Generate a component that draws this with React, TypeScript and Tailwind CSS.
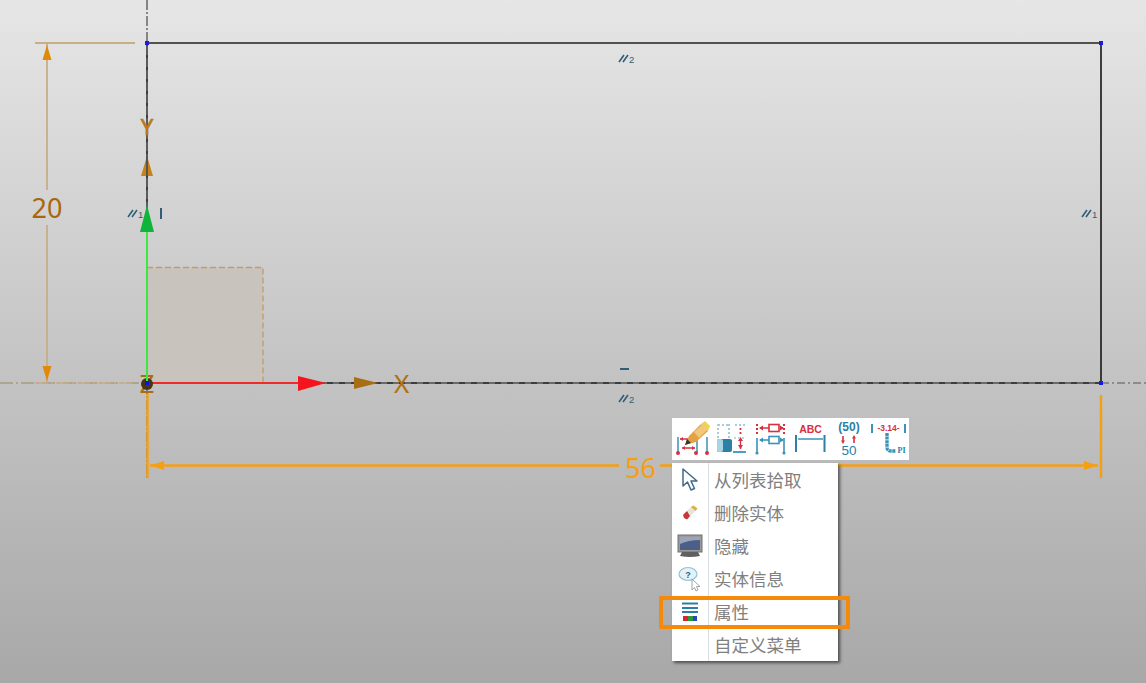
const cjk = "font-['Noto_Sans_CJK_SC','Noto_Sans',sans-serif]";
const ORANGE = "#f59f12";
const TAN = "#c9ad85";
const RED = "#d8303f";
const BLUE = "#3b93b8";
const LIGHT = "#a5cddc";
const DIMFONT = "Noto Sans, sans-serif";

function ParallelMark({ x, y, n }: { x: number; y: number; n: string }) {
  return (
    <g>
      <path d={`M${x} ${y + 7}L${x + 5} ${y}M${x + 4} ${y + 7}L${x + 9} ${y}`} stroke="#2f5d78" strokeWidth="1.6" />
      <text x={x + 10} y={y + 8} fontFamily="Liberation Sans" fontSize="9.5" fill="#3c5a6b">{n}</text>
    </g>
  );
}

function Drawing() {
  return (
    <svg className="absolute left-0 top-0" width="1146" height="683" viewBox="0 0 1146 683">
      {/* centre lines */}
      <line x1="147" y1="0" x2="147" y2="480" stroke="#858585" strokeWidth="2" strokeDasharray="10 2 2 2" />
      <line x1="0" y1="383" x2="147" y2="383" stroke="#a89a80" strokeWidth="1.5" strokeDasharray="13 3 2 3" />
      <line x1="1101" y1="383" x2="1146" y2="383" stroke="#8c8c8c" strokeWidth="1.8" strokeDasharray="8 3 2 3" />
      <line x1="147" y1="43" x2="147" y2="383" stroke="#5c5c5c" strokeWidth="2" />
      <line x1="147" y1="43" x2="147" y2="383" stroke="#222" strokeWidth="1" strokeDasharray="3 9" />

      {/* datum plane */}
      <path d="M147 267H263V383H147Z" fill="#c8c3bc" />
      <path d="M147 267.5H263V383" fill="none" stroke="#c29a6c" strokeWidth="1.3" strokeDasharray="6 3" />

      {/* rectangle */}
      <path d="M147 43H1101V383" fill="none" stroke="#222" strokeWidth="1.7" />
      <line x1="147" y1="383" x2="1101" y2="383" stroke="#6a6a6a" strokeWidth="2" />
      <line x1="147" y1="383" x2="1101" y2="383" stroke="#111" strokeWidth="1.2" strokeDasharray="6 6" />
      <rect x="145" y="41" width="4" height="4" fill="#1a1ae0" />
      <rect x="1099" y="41" width="4" height="4" fill="#1a1ae0" />
      <rect x="1099" y="381" width="4" height="4" fill="#1a1ae0" />

      {/* height dimension */}
      <line x1="35" y1="43" x2="135" y2="43" stroke={TAN} strokeWidth="2" />
      <line x1="35" y1="383" x2="135" y2="383" stroke={TAN} strokeWidth="1.5" strokeDasharray="13 3 2 3" />
      <line x1="47" y1="44" x2="47" y2="190" stroke={TAN} strokeWidth="1.8" />
      <line x1="47" y1="225" x2="47" y2="382" stroke={TAN} strokeWidth="1.8" />
      <path d="M47 45L51.5 60H42.5Z" fill="#e08a08" />
      <path d="M47 381L51.5 366H42.5Z" fill="#e08a08" />
      <text x="47" y="218" textAnchor="middle" fontFamily={DIMFONT} fontSize="27" fill="#a8670e">20</text>

      {/* width dimension */}
      <line x1="147.5" y1="394" x2="147.5" y2="478" stroke={ORANGE} strokeWidth="2.4" />
      <line x1="1101" y1="395" x2="1101" y2="478" stroke={ORANGE} strokeWidth="2.4" />
      <line x1="150" y1="465.5" x2="619" y2="465.5" stroke={ORANGE} strokeWidth="2.4" />
      <line x1="660" y1="465.5" x2="1098" y2="465.5" stroke={ORANGE} strokeWidth="2.4" />
      <path d="M150 465.5L164 461V470Z" fill={ORANGE} />
      <path d="M1098 465.5L1084 461V470Z" fill={ORANGE} />
      <text x="640.5" y="478" textAnchor="middle" fontFamily={DIMFONT} fontSize="27" fill={ORANGE}>56</text>

      {/* axes */}
      <line x1="147" y1="383" x2="147" y2="232" stroke="#3fe83f" strokeWidth="2" />
      <path d="M147 205L154 232H140Z" fill="#0fb53a" />
      <line x1="147" y1="383" x2="300" y2="383" stroke="#f02a2a" strokeWidth="2" />
      <path d="M326 383L298 376V391Z" fill="#f5141e" />
      <path d="M147 156L153 176H141Z" fill="#c98214" />
      <line x1="147" y1="156" x2="147" y2="176" stroke="#555" strokeWidth="2" />
      <path d="M378 383L354 377V389Z" fill="#a86e14" />
      <text x="401.5" y="393" textAnchor="middle" fontFamily={DIMFONT} fontSize="26" fill="#b06f14">X</text>
      <text x="147" y="135" textAnchor="middle" fontFamily={DIMFONT} fontSize="22" fill="#b87a1c" stroke="#b87a1c" strokeWidth="0.7">Y</text>
      <text x="147" y="393" textAnchor="middle" fontFamily={DIMFONT} fontSize="26" fill="#a86e14">Z</text>
      <circle cx="147" cy="384" r="6" fill="#4a3418" />
      <line x1="147" y1="375" x2="147" y2="383" stroke="#3fe83f" strokeWidth="2" />
      <rect x="145" y="381" width="4" height="4" fill="#1212e0" />

      {/* constraint marks */}
      <ParallelMark x={619} y={55} n="2" />
      <ParallelMark x={619} y={395} n="2" />
      <ParallelMark x={128} y={210} n="1" />
      <ParallelMark x={1082} y={210} n="1" />
      <path d="M620 369H629M161 208V219" stroke="#2f5d78" strokeWidth="2" />
    </svg>
  );
}

function ToolbarIcons() {
  return (
    <svg width="237" height="42" viewBox="0 0 237 42" className="block">
      {/* sketch dimension with pencil */}
      <path d="M6 19V34M25 19V34M35 19V34" stroke={BLUE} strokeWidth="1.5" fill="none" />
      <path d="M8 21H24M10 30H23" stroke={RED} strokeWidth="1.5" fill="none" />
      <path d="M8 21L11 19V23ZM24 21L21 19V23ZM10 30L13 28V32ZM23 30L20 28V32Z" fill={RED} />
      <circle cx="6" cy="35" r="2" fill={RED} />
      <circle cx="24" cy="35" r="2" fill={RED} />
      <circle cx="35" cy="35" r="2" fill={RED} />
      <path d="M17 18L29 6L36 13L24 24L13 27Z" fill="#e5a044" />
      <path d="M29 6L33 3L38 8L36 13Z" fill="#eed44a" />
      <path d="M22 14L31 6L36 11L27 20Z" fill="#f3c77a" />
      <path d="M13 27L15 21L19 25Z" fill="#333" />

      {/* dimension pair */}
      <path d="M46 6V20M57 6V20" stroke={LIGHT} strokeWidth="2" strokeDasharray="2 2" />
      <path d="M46 7H58" stroke={LIGHT} strokeWidth="2" strokeDasharray="2 2" />
      <rect x="45" y="21" width="15" height="13" rx="2" fill="#2e7fa6" />
      <rect x="45" y="21" width="6" height="13" rx="2" fill="#a9d4e4" />
      <path d="M63 7H74" stroke={LIGHT} strokeWidth="2" strokeDasharray="2 2" />
      <path d="M68.5 10V18" stroke={RED} strokeWidth="1.8" strokeDasharray="2 2" />
      <path d="M68.5 21V31" stroke={RED} strokeWidth="1.4" />
      <path d="M68.5 19L71 23H66ZM68.5 31L71 27H66Z" fill={RED} />
      <path d="M62 20H74" stroke={LIGHT} strokeWidth="1.6" strokeDasharray="2 2" />
      <path d="M61 34H74" stroke={BLUE} strokeWidth="1.8" />

      {/* symmetric */}
      <path d="M85 6V18M112 6V18" stroke={RED} strokeWidth="2" strokeDasharray="2 2" />
      <path d="M88 10H97M108 10H111" stroke={RED} strokeWidth="1.6" />
      <path d="M87 10L91 7.5V12.5ZM112 10L108 7.5V12.5Z" fill={RED} />
      <rect x="97" y="6.5" width="10" height="7" fill="none" stroke={RED} strokeWidth="1.6" />
      <path d="M85 20V34M112 20V34" stroke={BLUE} strokeWidth="1.6" />
      <circle cx="85" cy="35" r="1.6" fill={BLUE} />
      <circle cx="112" cy="35" r="1.6" fill={BLUE} />
      <path d="M88 22H97M108 22H111" stroke={BLUE} strokeWidth="1.6" />
      <path d="M87 22L91 19.5V24.5ZM112 22L108 19.5V24.5Z" fill={BLUE} />
      <rect x="97" y="18.5" width="10" height="7" fill="none" stroke={BLUE} strokeWidth="1.6" />

      {/* ABC */}
      <text x="138.5" y="15" fontFamily="Liberation Sans" fontWeight="700" fontSize="10.5" textAnchor="middle" fill={RED}>ABC</text>
      <path d="M124 17V34M152.5 17V34" stroke="#2e7fa6" strokeWidth="2" />
      <path d="M126 21H151" stroke={BLUE} strokeWidth="1.5" />

      {/* (50) / 50 */}
      <text x="177" y="13" fontFamily="Liberation Sans" fontWeight="700" fontSize="12" textAnchor="middle" fill="#2a7fa8">(50)</text>
      <path d="M171 18V23M182 25V20" stroke={RED} strokeWidth="1.6" />
      <path d="M169 22.5H173L171 26ZM180 20.5H184L182 17Z" fill={RED} />
      <text x="177" y="37" fontFamily="Liberation Sans" fontSize="13.5" textAnchor="middle" fill="#2a7fa8">50</text>

      {/* 3.14 PI */}
      <path d="M200 6V15M233 6V15" stroke={BLUE} strokeWidth="2" />
      <text x="216.5" y="13" fontFamily="Liberation Sans" fontWeight="700" fontSize="8.5" textAnchor="middle" fill={RED}>-3.14-</text>
      <path d="M215 15V29Q215 33 219 33H224" fill="none" stroke="#3b93b8" strokeWidth="3.4" strokeDasharray="3 0.6" />
      <text x="229.5" y="35" fontFamily="Liberation Serif" fontWeight="700" fontSize="8" textAnchor="middle" fill="#2a7fa8">PI</text>
    </svg>
  );
}

function CursorIcon() {
  return (
    <svg width="18" height="26" viewBox="0 0 18 26">
      <path d="M2 2V19L6.5 15L10 23L13.5 21.5L10 14H16Z" fill="#fff" stroke="#3f6a88" strokeWidth="1.5" strokeLinejoin="round" />
    </svg>
  );
}

function EraserIcon() {
  return (
    <svg width="18" height="18" viewBox="0 0 18 18">
      <path d="M2 11L11 2L16 5L7 15Z" fill="#e8e4da" />
      <path d="M10 3L12.5 1.5L16.5 4.5L14.5 7Z" fill="#e0b03c" />
      <path d="M2 11L6 7L9 12L6 15.5L3 14Z" fill="#c9363a" />
    </svg>
  );
}

function MonitorIcon() {
  return (
    <svg width="26" height="24" viewBox="0 0 26 24">
      <rect x="1" y="1" width="24" height="17" fill="#9a9a9a" stroke="#707070" />
      <rect x="3" y="3" width="20" height="13" fill="#4c5f86" />
      <path d="M3 3H23V6Q12 6 3 10Z" fill="#9aa5bd" />
      <path d="M5 18H21L23 22Q13 24 3 22Z" fill="#606060" />
    </svg>
  );
}

function InfoIcon() {
  return (
    <svg width="24" height="26" viewBox="0 0 24 26">
      <ellipse cx="10" cy="8" rx="9" ry="6.5" fill="#e4f1f6" stroke="#8fc3d8" strokeWidth="1.2" />
      <text x="10" y="11.5" fontFamily="Liberation Sans" fontWeight="700" fontSize="9" textAnchor="middle" fill="#20688c">?</text>
      <path d="M14 13V24L16.5 21.5L18 25L20 24L18.5 20.5H22Z" fill="#fff" stroke="#9a9a9a" strokeWidth="0.9" />
    </svg>
  );
}

function PropsIcon() {
  return (
    <svg width="18" height="20" viewBox="0 0 18 20">
      <path d="M1 1.5H17M1 6H17M1 10H17" stroke="#2d7ea6" strokeWidth="1.8" />
      <rect x="2" y="14" width="5" height="5" fill="#d8262c" />
      <rect x="7" y="14" width="5" height="5" fill="#2c9a3c" />
      <rect x="12" y="14" width="4" height="5" fill="#2c46b8" />
    </svg>
  );
}

const menuItems: { label: string; icon: React.ReactNode }[] = [
  { label: "从列表拾取", icon: <CursorIcon /> },
  { label: "删除实体", icon: <EraserIcon /> },
  { label: "隐藏", icon: <MonitorIcon /> },
  { label: "实体信息", icon: <InfoIcon /> },
  { label: "属性", icon: <PropsIcon /> },
  { label: "自定义菜单", icon: null },
];

export default function App() {
  return (
    <div className="relative h-[683px] w-[1146px] overflow-hidden bg-gradient-to-b from-[#e6e6e6] to-[#a8a8a8]">
      <Drawing />

      <div className="absolute left-[672px] top-[418px] flex flex-col gap-[3px]">
        <div className="bg-white">
          <ToolbarIcons />
        </div>
        <div className="relative w-[166px] bg-white shadow-[2px_2px_3px_rgba(0,0,0,0.55)]">
          {menuItems.map((item) => (
            <div key={item.label} className="flex h-[33px] items-center">
              <div className="flex h-full w-[37px] shrink-0 items-center justify-center border-r border-[#d8dde2]">
                {item.icon}
              </div>
              <span className={`pl-[5px] text-[17.5px] leading-none text-[#808080] ${cjk}`}>{item.label}</span>
            </div>
          ))}
          {/* highlight */}
          <div className="absolute left-[-13px] top-[133px] h-[33px] w-[191px] border-[4px] border-[#f58a0a]" />
        </div>
      </div>
    </div>
  );
}
